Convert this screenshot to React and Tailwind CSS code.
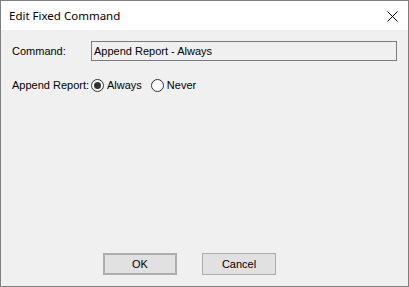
import { useState } from "react";

// radio button drawn like the classic windows one
function Radio({ checked, label, onClick }) {
  return (
    <button onClick={onClick} className="flex items-center gap-[3px] text-[11px] text-black">
      <svg width="13" height="13" viewBox="0 0 13 13">
        <circle cx="6.5" cy="6.5" r="6" fill="#ffffff" stroke="#333333" strokeWidth="1" />
        {checked && <circle cx="6.5" cy="6.5" r="3.5" fill="#333333" />}
      </svg>
      <span>{label}</span>
    </button>
  );
}

export default function App() {
  const [mode, setMode] = useState("always");

  return (
    <div
      className="w-[409px] h-[287px] flex flex-col border border-[#7f7f7f] bg-[#f0f0f0] overflow-hidden"
      style={{ fontFamily: '"Liberation Sans", Arial, sans-serif' }}
    >
      {/* title bar */}
      <div className="h-[29px] bg-white flex items-center justify-between pl-[8px] pr-[10px]">
        <span
          className="text-[11.5px] text-black"
          style={{ fontFamily: '"Segoe UI", "Noto Sans", sans-serif' }}
        >
          Edit Fixed Command
        </span>
        <svg width="11" height="11" viewBox="0 0 11 11" className="mt-[1px]">
          <path d="M0.5 0.5 L10.5 10.5 M10.5 0.5 L0.5 10.5" stroke="#000000" strokeWidth="1" />
        </svg>
      </div>

      {/* body */}
      <div className="flex-1 flex flex-col px-[11px] pt-[11px] pb-[11px] text-[11px] text-black">
        <div className="flex items-center">
          <span className="w-[79px]">Command:</span>
          <div className="w-[306px] h-[20px] border border-[#7a7a7a] bg-[#f0f0f0] flex items-center px-[2px]">
            Append Report - Always
          </div>
        </div>

        <div className="flex items-center mt-[16px]">
          <span className="w-[79px]">Append Report:</span>
          <div className="flex items-center gap-[9px]">
            <Radio checked={mode === "always"} label="Always" onClick={() => setMode("always")} />
            <Radio checked={mode === "never"} label="Never" onClick={() => setMode("never")} />
          </div>
        </div>

        <div className="mt-auto flex gap-[25px] pl-[91px]">
          <button className="w-[74px] h-[22px] bg-[#e1e1e1] border-2 border-[#adadad] text-[11px]">
            OK
          </button>
          <button className="w-[74px] h-[22px] bg-[#e1e1e1] border border-[#adadad] text-[11px]">
            Cancel
          </button>
        </div>
      </div>
    </div>
  );
}
